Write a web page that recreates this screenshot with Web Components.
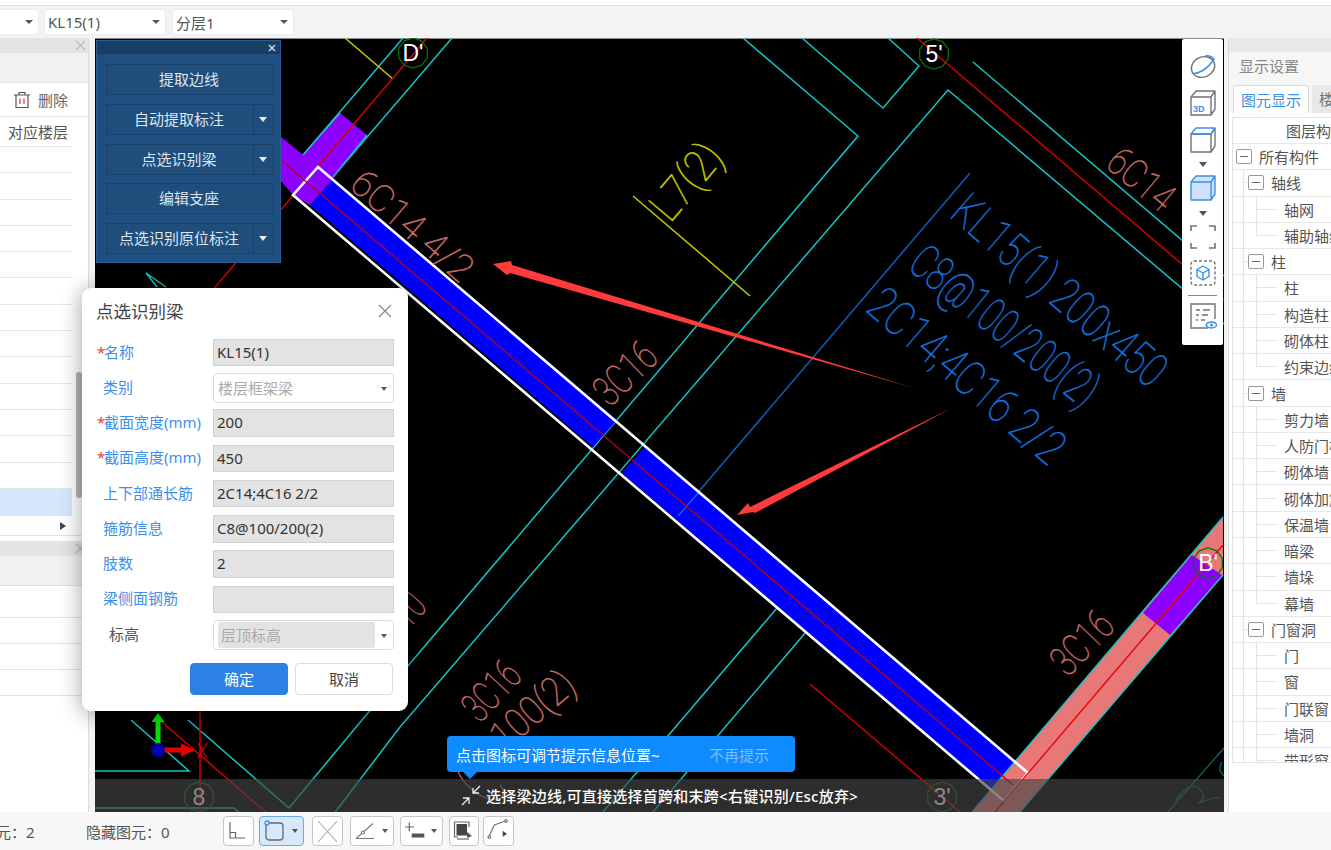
<!DOCTYPE html>
<html lang="zh">
<head>
<meta charset="utf-8">
<title>点选识别梁</title>
<style>
  html, body { margin: 0; height: 100%; overflow: hidden; background: #f3f3f3; }
  body { font: 15px "Noto Sans", "Noto Sans CJK SC", sans-serif; color: #555; }
</style>
</head>
<body>
<app-shell>
  <top-toolbar slot="top">
    <select-box style="width:39px" edge></select-box>
    <select-box style="width:122px;margin-right:1px">KL15(1)</select-box>
    <select-box style="width:122px">分层1</select-box>
  </top-toolbar>
  <left-panel slot="left"></left-panel>
  <cad-stage slot="stage">
    <tool-panel>
      <tool-button>提取边线</tool-button>
      <tool-button menu>自动提取标注</tool-button>
      <tool-button menu>点选识别梁</tool-button>
      <tool-button>编辑支座</tool-button>
      <tool-button menu>点选识别原位标注</tool-button>
    </tool-panel>
    <view-toolbar></view-toolbar>
    <hint-tip></hint-tip>
    <message-bar></message-bar>
  </cad-stage>
  <right-panel slot="right">
    <tree-row kind="root">所有构件</tree-row>
    <tree-row kind="group">轴线</tree-row>
    <tree-row kind="leaf">轴网</tree-row>
    <tree-row kind="last">辅助轴线</tree-row>
    <tree-row kind="group">柱</tree-row>
    <tree-row kind="leaf">柱</tree-row>
    <tree-row kind="leaf">构造柱</tree-row>
    <tree-row kind="leaf">砌体柱</tree-row>
    <tree-row kind="last">约束边缘</tree-row>
    <tree-row kind="group">墙</tree-row>
    <tree-row kind="leaf">剪力墙</tree-row>
    <tree-row kind="leaf">人防门槛</tree-row>
    <tree-row kind="leaf">砌体墙</tree-row>
    <tree-row kind="leaf">砌体加筋</tree-row>
    <tree-row kind="leaf">保温墙</tree-row>
    <tree-row kind="leaf">暗梁</tree-row>
    <tree-row kind="leaf">墙垛</tree-row>
    <tree-row kind="last">幕墙</tree-row>
    <tree-row kind="group">门窗洞</tree-row>
    <tree-row kind="leaf">门</tree-row>
    <tree-row kind="leaf">窗</tree-row>
    <tree-row kind="leaf">门联窗</tree-row>
    <tree-row kind="leaf">墙洞</tree-row>
    <tree-row kind="leaf">带形窗</tree-row>
  </right-panel>
  <status-bar slot="bottom"></status-bar>
  <beam-dialog slot="overlay">
    <form-row label="名称" value="KL15(1)" required></form-row>
    <form-row label="类别" value="楼层框架梁" type="select"></form-row>
    <form-row label="截面宽度(mm)" value="200" required></form-row>
    <form-row label="截面高度(mm)" value="450" required></form-row>
    <form-row label="上下部通长筋" value="2C14;4C16 2/2"></form-row>
    <form-row label="箍筋信息" value="C8@100/200(2)"></form-row>
    <form-row label="肢数" value="2"></form-row>
    <form-row label="梁侧面钢筋" value=""></form-row>
    <form-row label="标高" value="层顶标高" type="locked"></form-row>
  </beam-dialog>
</app-shell>

<script>
// page frame: top bar, three columns, status bar, and a slot for the floating dialog
class AppShell extends HTMLElement {
  constructor() {
    super();
    this.attachShadow({ mode: "open" });
    this.shadowRoot.innerHTML = `
      <style>
        :host { display: grid; position: relative; width: 1331px; height: 850px; overflow: hidden;
          grid-template: 38px 774px 38px / 89px 6px 1129px 4px 103px; background: #f3f3f3; }
        ::slotted([slot=top]), ::slotted([slot=bottom]) { grid-column: 1 / -1; }
        ::slotted([slot=left]) { grid-column: 1; }
        ::slotted([slot=stage]) { grid-column: 3; }
        ::slotted([slot=right]) { grid-column: 5; }
      </style>
      <slot name="top"></slot><slot name="left"></slot><slot name="stage"></slot>
      <slot name="right"></slot><slot name="bottom"></slot><slot name="overlay"></slot>`;
  }
}
customElements.define("app-shell", AppShell);

class TopToolbar extends HTMLElement {
  constructor() {
    super();
    this.attachShadow({ mode: "open" });
    this.shadowRoot.innerHTML = `
      <style>
        :host { display: flex; gap: 5px; height: 38px; box-sizing: border-box; padding-top: 9px;
          background: linear-gradient(#fff 5px, #dedede 5px, #dedede 6px, #f3f3f3 6px); }
      </style><slot></slot>`;
  }
}
customElements.define("top-toolbar", TopToolbar);

class SelectBox extends HTMLElement {
  constructor() {
    super();
    this.attachShadow({ mode: "open" });
    this.shadowRoot.innerHTML = `
      <style>
        :host { display: flex; align-items: center; height: 26px; box-sizing: border-box; padding-left: 3px;
          background: #fff; border: 1px solid #ececec; border-radius: 3px; position: relative; color: #555; }
        :host([edge]) { border-radius: 0 3px 3px 0; border-left: 0; }
        i { position: absolute; right: 5px; top: 10px; border: 4px solid transparent; border-top: 4px solid #555; border-bottom: 0; }
      </style><slot></slot><i></i>`;
  }
}
customElements.define("select-box", SelectBox);

class LeftPanel extends HTMLElement {
  constructor() {
    super();
    this.attachShadow({ mode: "open" });
    const rows = Array.from({ length: 13 }, () => `<div class="row"></div>`).join("");
    this.shadowRoot.innerHTML = `
      <style>
        :host { display: block; position: relative; background: #fff; border-right: 1px solid #dcdcdc; box-sizing: border-box; height: 774px; overflow: hidden; }
        .head { height: 15px; background: #e4e4e4; position: relative; }
        .head svg { position: absolute; right: 2px; top: 2px; }
        .band { height: 29px; background: #f1f1f1; border-bottom: 1px solid #e2e2e2; }
        .tools { height: 33px; display: flex; align-items: center; justify-content: flex-end; gap: 7px; padding-right: 20px; border-bottom: 1px solid #e2e2e2; color: #666; }
        .title { height: 29px; line-height: 30px; width: 68px; text-align: right; border-bottom: 1px solid #e8e8e8; color: #555; white-space: nowrap; padding-right: 4px; }
        .row { height: 25.3px; width: 72px; border-bottom: 1px solid #e8e8e8; }
        .row.on { background: #d5e8fb; height: 26px; }
        .arrow { height: 19px; position: relative; border-bottom: 1px solid #e2e2e2; }
        .arrow i { position: absolute; left: 60px; top: 6px; border: 4px solid transparent; border-left: 6px solid #445; border-right: 0; }
        .gap { height: 5px; }
        .band2 { height: 29px; background: #f1f1f1; border-bottom: 1px solid #e2e2e2; }
        .r2 { height: 25.2px; border-bottom: 1px solid #e2e2e2; }
        .thumb { position: absolute; left: 76px; top: 334px; width: 6px; height: 126px; background: #b4b4b4; border-radius: 3px; }
      </style>
      <div class="head"><svg width="11" height="11" viewBox="0 0 11 11"><path d="M1 1l9 9M10 1l-9 9" stroke="#bbb" stroke-width="1.2"/></svg></div>
      <div class="band"></div>
      <div class="tools">
        <svg width="18" height="18" viewBox="0 0 18 18" fill="none" stroke="#555" stroke-width="1.2"><path d="M1 4h16M6 4V1.5h6V4M3 4v12.5h12V4"/><path d="M7 7.5v5.5M11 7.5v5.5" stroke="#e33" /></svg>
        <span>删除</span>
      </div>
      <div class="title">对应楼层</div>
      ${rows}
      <div class="row on"></div>
      <div class="arrow"><i></i></div>
      <div class="gap"></div>
      <div class="head"><svg width="11" height="11" viewBox="0 0 11 11"><path d="M1 1l9 9M10 1l-9 9" stroke="#bbb" stroke-width="1.2"/></svg></div>
      <div class="band2"></div>
      <div class="r2" style="height:31px"></div><div class="r2"></div><div class="r2"></div><div class="r2"></div>
      <div class="thumb"></div>`;
  }
}
customElements.define("left-panel", LeftPanel);

// the drawing itself, page coordinates kept through the viewBox
class CadStage extends HTMLElement {
  constructor() {
    super();
    this.attachShadow({ mode: "open" });
    const cad = (t, x, y, a, len, size, color) =>
      `<text class="cad" transform="translate(${x} ${y}) rotate(${a})" textLength="${len}" lengthAdjust="spacingAndGlyphs" font-size="${size}" fill="${color}" stroke="${color}" stroke-width=".5">${t}</text>`;
    // axis bubbles are ten sided in the drawing
    const mark = (t, x, y) => {
      const pts = Array.from({ length: 10 }, (_, i) => {
        const r = (Math.PI / 5) * i + Math.PI / 10;
        return `${(x + 15 * Math.cos(r)).toFixed(1)},${(y + 15 * Math.sin(r)).toFixed(1)}`;
      }).join(" ");
      return `<polygon points="${pts}" fill="none" stroke="#0a6e0a" stroke-width="1.3"/>
      <text x="${x}" y="${y + 8}" font-family="'Liberation Sans',sans-serif" font-size="23" fill="#fff" text-anchor="middle">${t}</text>`;
    };
    this.shadowRoot.innerHTML = `
      <style>
        :host { display: block; position: relative; background: #000; overflow: hidden; }
        svg { display: block; position: absolute; inset: 0; }
        .cad { font-family: Roboto, "Liberation Sans", sans-serif; font-weight: 100; }
      </style>
      <svg width="1129" height="774" viewBox="95 38 1129 774" fill="none">
        <rect x="95" y="38" width="1129" height="1" fill="#8a8a8a"/>

        <g stroke="#14c4c4" stroke-width="1.5">
          <path d="M303 155L403 38M333 177L452 38"/>
          <path d="M743 38L858 136L362 720"/>
          <path d="M802 38L883 108L919 66L888 38"/>
          <path d="M973 62L1224 276"/>
          <path d="M1224 324L948 90L400 727L333 815"/>
          <path d="M777 608L603 812M806 632L653 812"/>
          <path d="M131 720L189 771H95M188 720L289 808L362 720M95 808H234L248 820"/>
          <path d="M146 273L166 287M146 273L157 287"/>
        </g>
        <g stroke="#0b6d72" stroke-width="1.2">
          <path d="M1224 748L1168 812"/>
          <path d="M1222 762q-5 8 2 14M1176 800c8-12 16-16 22-12s8 10 2 14s12-6 20-4"/>
        </g>

        <g stroke="#c8c800" stroke-width="1.5">
          <path d="M345 38L393 79M633 196L750 296"/>
        </g>

        <g stroke="#d00000" stroke-width="1.5">
          <path d="M917 38L1224 300"/>
          <path d="M200 700V812"/>
          <path d="M162 722L269 815"/>
          <path d="M810 684L960 812"/>
        </g>

        <path d="M970 173L678 516" stroke="#0a5fc0" stroke-width="1.5"/>

        <path d="M340 113L367 135L332 180L310 205L293 195L280 180L280 136L303 155Z" fill="#8b00ff"/>
        <path d="M333 177L367 135" stroke="#14c4c4" stroke-width="1.2"/>
        <path d="M303 155L340 113" stroke="#14c4c4" stroke-width="1.2"/>
        <path d="M332 180L310 205L593 447L617 420Z" fill="#0000ff"/>
        <path d="M645 447L622 473L1004 801L1028 773Z" fill="#0000ff"/>
        <path d="M678 516L700 491" stroke="#1470d8" stroke-width="1.2"/>
        <path d="M427 38L160 352" stroke="#d00000" stroke-width="1.5"/>

        <path d="M1223 517L972 812H1020L1223 575Z" fill="#e87878"/>
        <path d="M1223 517L972 812M1223 575L1020 812" stroke="#14c4c4" stroke-width="1.4"/>
        <path d="M1192 555L1222 575L1170 635L1143 613Z" fill="#8b00ff"/>

        <path d="M318 167L1028 773L1004 801L293 195Z" stroke="#fff" stroke-width="2.6"/>
        <path d="M282 161L1013 785" stroke="#b00020" stroke-width="1.4"/>
        <path d="M1223 545L995 812" stroke="#f00000" stroke-width="1.4"/>

        ${mark("D'", 413, 53)}
        ${mark("5'", 934, 54)}
        ${mark("B'", 1208, 563)}
        ${mark("8", 199, 797)}
        ${mark("3'", 942, 797)}

        ${cad("6C14 4/2", 348, 187, 41, 148, 38, "#c96a63")}
        ${cad("6C14", 1104, 166, 40, 74, 40, "#c96a63")}
        ${cad("3C16", 610, 408, -44, 70, 42, "#c96a63")}
        ${cad("3C16", 480, 724, -47, 64, 42, "#c96a63")}
        ${cad("3C16", 1068, 678, -46, 70, 42, "#c96a63")}
        ${cad("100(2)", 505, 752, -41, 97, 40, "#c96a63")}
        ${cad("3C10", 386, 655, -48, 64, 42, "#c96a63")}
        ${cad("L7(2)", 670, 224, -50, 86, 44, "#c8c800")}
        ${cad("KL15(1) 200x450", 948, 216, 40.7, 266, 48, "#1470d8")}
        ${cad("C8@100/200(2)", 906, 268, 38.6, 226, 48, "#1470d8")}
        ${cad("2C14;4C16 2/2", 864, 310, 40.4, 242, 48, "#1470d8")}

        <path d="M458 772c6 12 18 24 32 27s16-8 10-14" stroke="#c96a63" stroke-width="1.2"/>

        <path d="M493 264L511 261L512 265L914 388L510 273L507 275Z" fill="#ff3b3b"/>
        <path d="M737 515L748 503L750 507L952 408L755 513L753 512Z" fill="#ff3b3b"/>

        <path d="M155.500 750V722h-4l6.500-9 6.500 9h-4v28Z" fill="#00e000"/>
        <path d="M158 747.500h23v-4l14 6.500-14 6.500v-4h-23Z" fill="#e80000"/>
        <circle cx="158" cy="750" r="7" fill="#0000a8"/>
        <path d="M198 743l9 15M207 743l-9 15" stroke="#e00000" stroke-width="1.3"/>
      </svg>
      <slot></slot>`;
  }
}
customElements.define("cad-stage", CadStage);

class ToolPanel extends HTMLElement {
  constructor() {
    super();
    this.attachShadow({ mode: "open" });
    this.shadowRoot.innerHTML = `
      <style>
        :host { position: absolute; left: 1px; top: 2px; width: 185px; height: 223px; box-sizing: border-box;
          background: #1f4f80; border: 1px solid #2a5d92; display: flex; flex-direction: column; }
        header { height: 13px; background: #1a3d63; position: relative; flex: none; }
        header svg { position: absolute; right: 4px; top: 3px; }
        main { display: flex; flex-direction: column; gap: 8.750px; padding: 10px 6px 0 9px; }
      </style>
      <header><svg width="8" height="8" viewBox="0 0 8 8"><path d="M1 1l6 6M7 1l-6 6" stroke="#c8d6e6" stroke-width="1.5"/></svg></header>
      <main><slot></slot></main>`;
  }
}
customElements.define("tool-panel", ToolPanel);

class ToolButton extends HTMLElement {
  constructor() {
    super();
    this.attachShadow({ mode: "open" });
    this.shadowRoot.innerHTML = `
      <style>
        :host { display: flex; height: 31px; box-sizing: border-box; background: #1f4e7d; border: 1px solid #1a416a; color: #dde5ee; }
        span { flex: 1; text-align: center; line-height: 29px; white-space: nowrap; padding-right: 2px; }
        i { display: none; width: 19px; border-left: 1px solid #1a416a; position: relative; }
        i::after { content: ""; position: absolute; left: 5px; top: 12px; border: 4.500px solid transparent; border-top: 5px solid #e8eef5; border-bottom: 0; }
        :host([menu]) i { display: block; }
      </style><span><slot></slot></span><i></i>`;
  }
}
customElements.define("tool-button", ToolButton);

class ViewToolbar extends HTMLElement {
  constructor() {
    super();
    this.attachShadow({ mode: "open" });
    const g = "#6f7478", b = "#3d8fe8";
    this.shadowRoot.innerHTML = `
      <style>
        :host { position: absolute; left: 1087px; top: 1px; width: 41px; height: 306px; background: #fff; border-radius: 2px;
          display: flex; flex-direction: column; align-items: center; }
        svg { display: block; flex: none; }
        .caret { width: 0; height: 0; border: 4px solid transparent; border-top: 5px solid #555; border-bottom: 0; flex: none; }
        hr { width: 29px; height: 1px; margin: 0; border: 0; background: #888; flex: none; }
      </style>
      <svg style="margin-top:14px" width="28" height="28" viewBox="0 0 28 28" fill="none" stroke="${g}" stroke-width="1.4">
        <ellipse cx="14" cy="14" rx="12" ry="10" transform="rotate(-25 14 14)"/>
        <path d="M3 20C8 22 19 16 25 6c-1-2-5-4-9-3" stroke="${b}" stroke-width="1.5"/>
      </svg>
      <svg style="margin-top:8px" width="28" height="28" viewBox="0 0 28 28" fill="none" stroke="${g}" stroke-width="1.4" stroke-linejoin="round">
        <path d="M2 8h20v18H2ZM2 8l5-6h19v18l-4 6M22 8l4-6"/>
        <text x="4" y="22.500" font-family="'Liberation Sans',sans-serif" font-weight="700" font-size="9" fill="${b}" stroke="none">3D</text>
      </svg>
      <svg style="margin-top:9px" width="28" height="28" viewBox="0 0 28 28" fill="none" stroke="${g}" stroke-width="1.4" stroke-linejoin="round">
        <path d="M2 8h20v18H2ZM22 8v18l4-6V2M22 8l4-6"/>
        <path d="M2 8l5-6h19l-4 6Z" stroke="${b}"/>
      </svg>
      <div class="caret" style="margin-top:8px"></div>
      <svg style="margin-top:7px" width="28" height="28" viewBox="0 0 28 28" fill="#cfe2f9" stroke="${b}" stroke-width="1.4" stroke-linejoin="round">
        <path d="M2 8h20v18H2ZM22 8v18l4-6V2ZM2 8l5-6h19l-4 6Z"/>
      </svg>
      <div class="caret" style="margin-top:9px"></div>
      <svg style="margin-top:7px" width="28" height="28" viewBox="0 0 28 28" fill="none" stroke="${g}" stroke-width="1.6">
        <path d="M2 8V3h6M20 3h6v5M26 20v5h-6M8 25H2v-5"/>
      </svg>
      <svg style="margin-top:8px" width="28" height="28" viewBox="0 0 28 28" fill="none" stroke-width="1.4">
        <rect x="2" y="2" width="24" height="24" rx="3" stroke="${g}" stroke-dasharray="3 2"/>
        <path d="M14 7l6 3.500v7L14 21l-6-3.500v-7ZM8 10.500l6 3.500 6-3.500M14 14v7" stroke="${b}" stroke-linejoin="round"/>
      </svg>
      <hr style="margin-top:8px">
      <svg style="margin-top:6px" width="28" height="28" viewBox="0 0 28 28" fill="none" stroke="${g}" stroke-width="1.4">
        <path d="M19 26H2V2h24v15"/>
        <path d="M7 8h4M14 8h7M7 13h3M13 13h6M7 18h2M12 18h4"/>
        <path d="M17 23c2-4 9-4 11 0c-2 4-9 4-11 0Z" stroke="${b}"/><circle cx="22.500" cy="23" r="1.500" fill="${b}" stroke="none"/>
      </svg>`;
  }
}
customElements.define("view-toolbar", ViewToolbar);

class HintTip extends HTMLElement {
  constructor() {
    super();
    this.attachShadow({ mode: "open" });
    this.shadowRoot.innerHTML = `
      <style>
        :host { position: absolute; left: 352px; top: 698px; width: 348px; height: 36px; z-index: 2; box-sizing: border-box; padding-left: 9px;
          background: #0d8bff; border-radius: 4px; color: #fff; display: flex; align-items: center; justify-content: space-between; white-space: nowrap; }
        b { font-weight: 400; color: #7dbdf8; margin-right: 26px; }
        i { position: absolute; left: 16px; top: 36px; border: 7px solid transparent; border-top: 7px solid #0d8bff; border-bottom: 0; }
      </style><span>点击图标可调节提示信息位置~</span><b>不再提示</b><i></i>`;
  }
}
customElements.define("hint-tip", HintTip);

class MessageBar extends HTMLElement {
  constructor() {
    super();
    this.attachShadow({ mode: "open" });
    this.shadowRoot.innerHTML = `
      <style>
        :host { position: absolute; left: 0; right: 0; bottom: 0; height: 33px; background: rgba(69, 69, 69, .65); color: #fff; font-size: 15px; letter-spacing: .25px;
          display: flex; align-items: center; padding-left: 366px; gap: 4px; white-space: nowrap; font-weight: 500; }
      </style>
      <svg width="21" height="21" viewBox="0 0 21 21" fill="none" stroke="#eee" stroke-width="1.3">
        <path d="M19 1L12 8M12 3v5h6M1 20l7-7M2 13h6v6"/>
      </svg>
      <span>选择梁边线,可直接选择首跨和末跨&lt;右键识别/Esc放弃&gt;</span>`;
  }
}
customElements.define("message-bar", MessageBar);

class RightPanel extends HTMLElement {
  constructor() {
    super();
    this.attachShadow({ mode: "open" });
    this.shadowRoot.innerHTML = `
      <style>
        :host { display: block; background: #fff; border-left: 1px solid #d8d8d8; box-sizing: border-box; height: 774px; overflow: hidden; }
        .bar { height: 14px; background: #e8e8e8; }
        h4 { margin: 0; height: 33px; line-height: 28px; font-weight: 400; padding-left: 10px; color: #888; background: #f6f6f6; }
        .tabs { display: flex; height: 28px; gap: 3px; padding-left: 4px; background: #f6f6f6; white-space: nowrap; overflow: hidden; }
        .tabs span { padding: 0 7px; line-height: 28px; flex: none; border-radius: 3px 3px 0 0; }
        .tabs .on { width: 76px; box-sizing: border-box; padding-left: 7px; background: #fff; color: #3d8fe8; border: 1px solid #ddd; border-bottom: 0; }
        .tabs .off { background: #e8e8e8; color: #777; }
        .box { margin: 4px 0 0 3px; height: 646px; border: 1px solid #e2e2e2; border-right: 0; overflow: hidden; box-sizing: border-box; }
        .th { height: 26px; line-height: 26px; padding-left: 53px; border-bottom: 1px solid #e8e8e8; white-space: nowrap; box-sizing: border-box; }
      </style>
      <div class="bar"></div>
      <h4>显示设置</h4>
      <div class="tabs"><span class="on">图元显示</span><span class="off">楼层显示</span></div>
      <div class="box"><div class="th">图层构件</div><slot></slot></div>`;
  }
}
customElements.define("right-panel", RightPanel);

class TreeRow extends HTMLElement {
  constructor() {
    super();
    this.attachShadow({ mode: "open" });
    this.shadowRoot.innerHTML = `
      <style>
        :host { display: flex; align-items: center; height: 26.270px; box-sizing: border-box; border-bottom: 1px solid #e8e8e8; white-space: nowrap; overflow: hidden; --g: #e4e4e4;
          background-repeat: no-repeat; }
        :host([kind=root]) { padding-left: 3px; }
        :host([kind=group]) { padding-left: 15px;
          background-image: linear-gradient(var(--g), var(--g)), linear-gradient(var(--g), var(--g));
          background-size: 4px 1px, 1px 100%; background-position: 11px 50%, 10px 0; }
        :host([kind=leaf]), :host([kind=last]) { padding-left: 51px;
          background-image: linear-gradient(var(--g), var(--g)), linear-gradient(var(--g), var(--g)), linear-gradient(var(--g), var(--g));
          background-size: 21px 1px, 1px 100%, 1px 100%; background-position: 23px 50%, 23px 0, 10px 0; }
        :host([kind=last]) { background-size: 21px 1px, 1px 50%, 1px 100%; }
        i { flex: none; width: 16px; height: 15px; box-sizing: border-box; border: 1px solid #999; border-radius: 2px; margin-right: 7px; position: relative; background: #fff; }
        i::after { content: ""; position: absolute; left: 3px; right: 3px; top: 6px; height: 1px; background: #666; }
        :host([kind=leaf]) i, :host([kind=last]) i { display: none; }
      </style><i></i><slot></slot>`;
  }
}
customElements.define("tree-row", TreeRow);

class StatusBar extends HTMLElement {
  constructor() {
    super();
    this.attachShadow({ mode: "open" });
    const caret = `<i></i>`;
    this.shadowRoot.innerHTML = `
      <style>
        :host { display: flex; align-items: center; height: 38px; background: #f7f7f7; white-space: nowrap; }
        .a { width: 90px; margin-left: -4px; } .b { width: 137px; }
        button { all: unset; box-sizing: border-box; height: 30px; background: #fff; border: 1.500px solid #c6c6c6; border-radius: 4px; display: flex; align-items: center; padding-left: 2px; margin-right: 5px; position: relative; }
        button.on { background: #d7e8fb; border-color: #6aa8ea; }
        i { position: absolute; right: 5px; top: 12px; border: 3.500px solid transparent; border-top: 4px solid #555; border-bottom: 0; }
      </style>
      <span class="a">元：2</span><span class="b">隐藏图元：0</span>
      <button style="width:31px"><svg width="25" height="25" viewBox="0 0 25 25" fill="none" stroke="#666" stroke-width="1.2"><path d="M4 3v16h15M4 13.500h5.500v5.500"/></svg></button>
      <button class="on" style="width:45px;margin-right:8px"><svg width="25" height="25" viewBox="0 0 25 25" fill="none" stroke="#667" stroke-width="1.3"><rect x="4" y="4" width="17" height="17" rx="3"/><circle cx="5" cy="4" r="2" fill="#d7e8fb" stroke="#3d8fe8"/></svg>${caret}</button>
      <button style="width:31px;margin-right:7px"><svg width="25" height="25" viewBox="0 0 25 25" fill="none" stroke="#aaa" stroke-width="1.1"><path d="M3 2l19 21M22 2L3 23"/></svg></button>
      <button style="width:44px;margin-right:6px"><svg width="25" height="25" viewBox="0 0 25 25" fill="none" stroke="#777" stroke-width="1.1"><path d="M3 19.500H21M3 19.500L20 4.500"/><circle cx="10" cy="13.500" r="1.500" fill="#fff"/></svg>${caret}</button>
      <button style="width:43px;margin-right:6px"><svg width="25" height="25" viewBox="0 0 25 25" fill="none" stroke="#666" stroke-width="1.2"><path d="M6.300 3.500v9M2 8h9"/><rect x="8.700" y="14.500" width="12.600" height="4" fill="#555" stroke="none"/></svg>${caret}</button>
      <button style="width:30px;margin-right:4px"><svg width="25" height="25" viewBox="0 0 25 25" fill="none" stroke="#666" stroke-width="1.2"><path d="M17 8V3H2.500v15H6"/><rect x="4.500" y="5" width="10.500" height="11.500" fill="#444" stroke="none"/><path d="M5 20h12"/><path d="M15 13l5 4-5 2Z" fill="#555" stroke="none"/></svg></button>
      <button style="width:31px"><svg width="25" height="25" viewBox="0 0 25 25" fill="none" stroke="#777" stroke-width="1.2"><path d="M3.300 17L8.300 6L20 1.800"/><circle cx="3.300" cy="18" r="1.300" fill="#fff"/><circle cx="20" cy="2" r="1.300" fill="#fff"/><path d="M16.700 11.800L21 15l-4.300 2.800Z" fill="#444" stroke="none"/></svg></button>`;
  }
}
customElements.define("status-bar", StatusBar);

class BeamDialog extends HTMLElement {
  constructor() {
    super();
    this.attachShadow({ mode: "open" });
    this.shadowRoot.innerHTML = `
      <style>
        :host { position: absolute; left: 82px; top: 288px; width: 326px; height: 423px; box-sizing: border-box; background: #fff; border-radius: 9px;
          box-shadow: 0 2px 22px rgba(0, 0, 0, .38); display: flex; flex-direction: column; }
        header { height: 47px; box-sizing: border-box; padding: 0 15px 2px 14px; flex: none; display: flex; align-items: center; justify-content: space-between; font-size: 17.500px; color: #444; }
        footer { display: flex; gap: 7px; padding: 11px 15px 0 108px; }
        button { all: unset; box-sizing: border-box; width: 98px; height: 32px; border-radius: 4px; text-align: center; line-height: 30px; }
        .ok { background: #2b82e4; color: #fff; border: 1px solid #2b82e4; }
        .no { background: #fff; color: #444; border: 1px solid #ddd; }
      </style>
      <header><span>点选识别梁</span><svg width="16" height="16" viewBox="0 0 16 16"><path d="M2 2l12 12M14 2L2 14" stroke="#8a8a8a" stroke-width="1.3"/></svg></header>
      <slot></slot>
      <footer><button class="ok">确定</button><button class="no">取消</button></footer>`;
  }
}
customElements.define("beam-dialog", BeamDialog);

class FormRow extends HTMLElement {
  constructor() {
    super();
    this.attachShadow({ mode: "open" });
  }
  connectedCallback() {
    const label = this.getAttribute("label");
    const value = this.getAttribute("value");
    const type = this.getAttribute("type");
    const star = this.hasAttribute("required") ? "<em>*</em>" : "";
    let field = `<div class="input">${value}</div>`;
    if (type === "select") field = `<div class="select">${value}<i></i></div>`;
    if (type === "locked") field = `<div class="select"><u>${value}</u><i></i></div>`;
    this.shadowRoot.innerHTML = `
      <style>
        :host { display: flex; align-items: center; height: 35.250px; padding-right: 14px; white-space: nowrap; }
        .lab { width: 131px; box-sizing: border-box; flex: none; color: #3d8fe8; padding: 0 0 3px 21px; }
        :host([required]) .lab { padding-left: 15px; }
        :host([type=locked]) .lab { padding-left: 27px; color: #555; }
        em { color: #f03a3a; font-style: normal; display: inline-block; width: 7px; }
        .input { flex: 1; height: 27.500px; box-sizing: border-box; background: #e3e3e3; border: 1px solid #d2d2d2; padding-left: 3px; line-height: 25px; color: #333; }
        .select { flex: 1; height: 30px; box-sizing: border-box; border: 1px solid #dcdcdc; border-radius: 4px; padding-left: 4px; line-height: 28px; color: #aaa; position: relative; }
        .select u { display: block; text-decoration: none; width: 157px; height: 26px; margin: 1px 0 0 0; padding-left: 3px; box-sizing: border-box; line-height: 26px; background: #e3e3e3; border-radius: 3px; }
        i { position: absolute; right: 6px; top: 13px; border: 3.500px solid transparent; border-top: 4px solid #555; border-bottom: 0; }
      </style>
      <div class="lab">${star}${label}</div>${field}`;
  }
}
customElements.define("form-row", FormRow);
</script>
</body>
</html>
